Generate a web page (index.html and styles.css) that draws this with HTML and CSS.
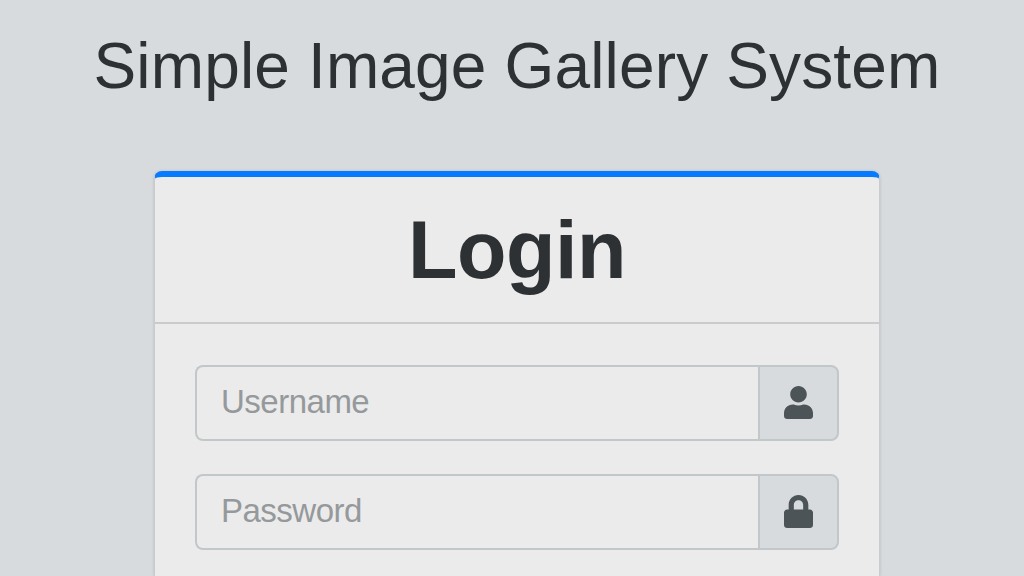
FILE: index.html
```html
<!DOCTYPE html>
<html lang="en">
<head>
<meta charset="utf-8">
<title>Simple Image Gallery System</title>
<link rel="stylesheet" href="styles.css">
</head>
<body>
<main class="page">
  <h1 class="title">Simple Image Gallery System</h1>
  <section class="card">
    <header class="card-header"><h2 class="heading">Login</h2></header>
    <form class="card-body">
      <div class="group">
        <input class="field" type="text" placeholder="Username">
        <span class="addon"><svg class="icon" viewBox="0 0 448 512" preserveAspectRatio="none"><path d="M224 256c70.7 0 128-57.3 128-128S294.700 0 224 0 96 57.300 96 128s57.300 128 128 128zm89.600 32h-16.700c-22.200 10.200-46.900 16-72.900 16s-50.600-5.800-72.900-16h-16.700C60.200 288 0 348.200 0 422.400V464c0 26.500 21.500 48 48 48h352c26.500 0 48-21.500 48-48v-41.600c0-74.200-60.200-134.400-134.400-134.400z"/></svg></span>
      </div>
      <div class="group">
        <input class="field" type="password" placeholder="Password">
        <span class="addon"><svg class="icon" viewBox="0 0 448 512" preserveAspectRatio="none"><path d="M400 224h-24v-72C376 68.200 307.800 0 224 0S72 68.200 72 152v72H48c-26.500 0-48 21.500-48 48v192c0 26.500 21.500 48 48 48h352c26.500 0 48-21.500 48-48V272c0-26.500-21.500-48-48-48zm-104 0H152v-72c0-39.700 32.300-72 72-72s72 32.300 72 72v72z"/></svg></span>
      </div>
    </form>
  </section>
</main>
</body>
</html>
```
FILE: styles.css
```css
* { box-sizing: border-box; }
body {
  margin: 0;
  height: 576px;
  overflow: hidden;
  background: #d7dbde;
  color: #2d3133;
  font-family: "Liberation Sans", Arial, sans-serif;
}
.page {
  display: flex;
  flex-direction: column;
  align-items: center;
  height: 576px;
  padding: 28px 0 0 10px;
}
.title {
  margin: 0;
  font-size: 64px;
  line-height: 76px;
  font-weight: 400;
  letter-spacing: .15px;
  white-space: nowrap;
}
.card {
  flex: 1;
  width: 726px;
  margin-top: 67px;
  background: #ebebeb;
  border: 1px solid #c8ccce;
  border-top: 6px solid #077bff;
  border-bottom: 0;
  border-radius: 8px 8px 0 0;
  box-shadow: 0 0 3px rgba(0, 0, 0, .15);
}
.card-header { height: 147px; border-bottom: 2px solid #c9cbcc; text-align: center; }
.heading {
  margin: 0;
  padding-top: 25px;
  font-size: 81px;
  line-height: 96px;
  font-weight: 700;
  letter-spacing: -.5px;
}
.card-body { display: flex; flex-direction: column; gap: 33px; padding: 41px 40px 20px; }
.group { display: flex; height: 76px; }
.field {
  flex: 1;
  min-width: 0;
  padding: 0 24px 3px;
  border: 2px solid #c2c7ca;
  border-right: 0;
  border-radius: 8px 0 0 8px;
  background: transparent;
  font: 33px "Liberation Sans", Arial, sans-serif;
  letter-spacing: -.5px;
}
.field::placeholder { color: #95999b; opacity: 1; }
.addon {
  display: flex;
  width: 81px;
  align-items: center;
  justify-content: center;
  padding: 0 1px 1px 0;
  border: 2px solid #c2c7ca;
  border-radius: 0 8px 8px 0;
  background: #d7dbde;
}
.icon { width: 29px; height: 33px; fill: #4d5458; }
```
